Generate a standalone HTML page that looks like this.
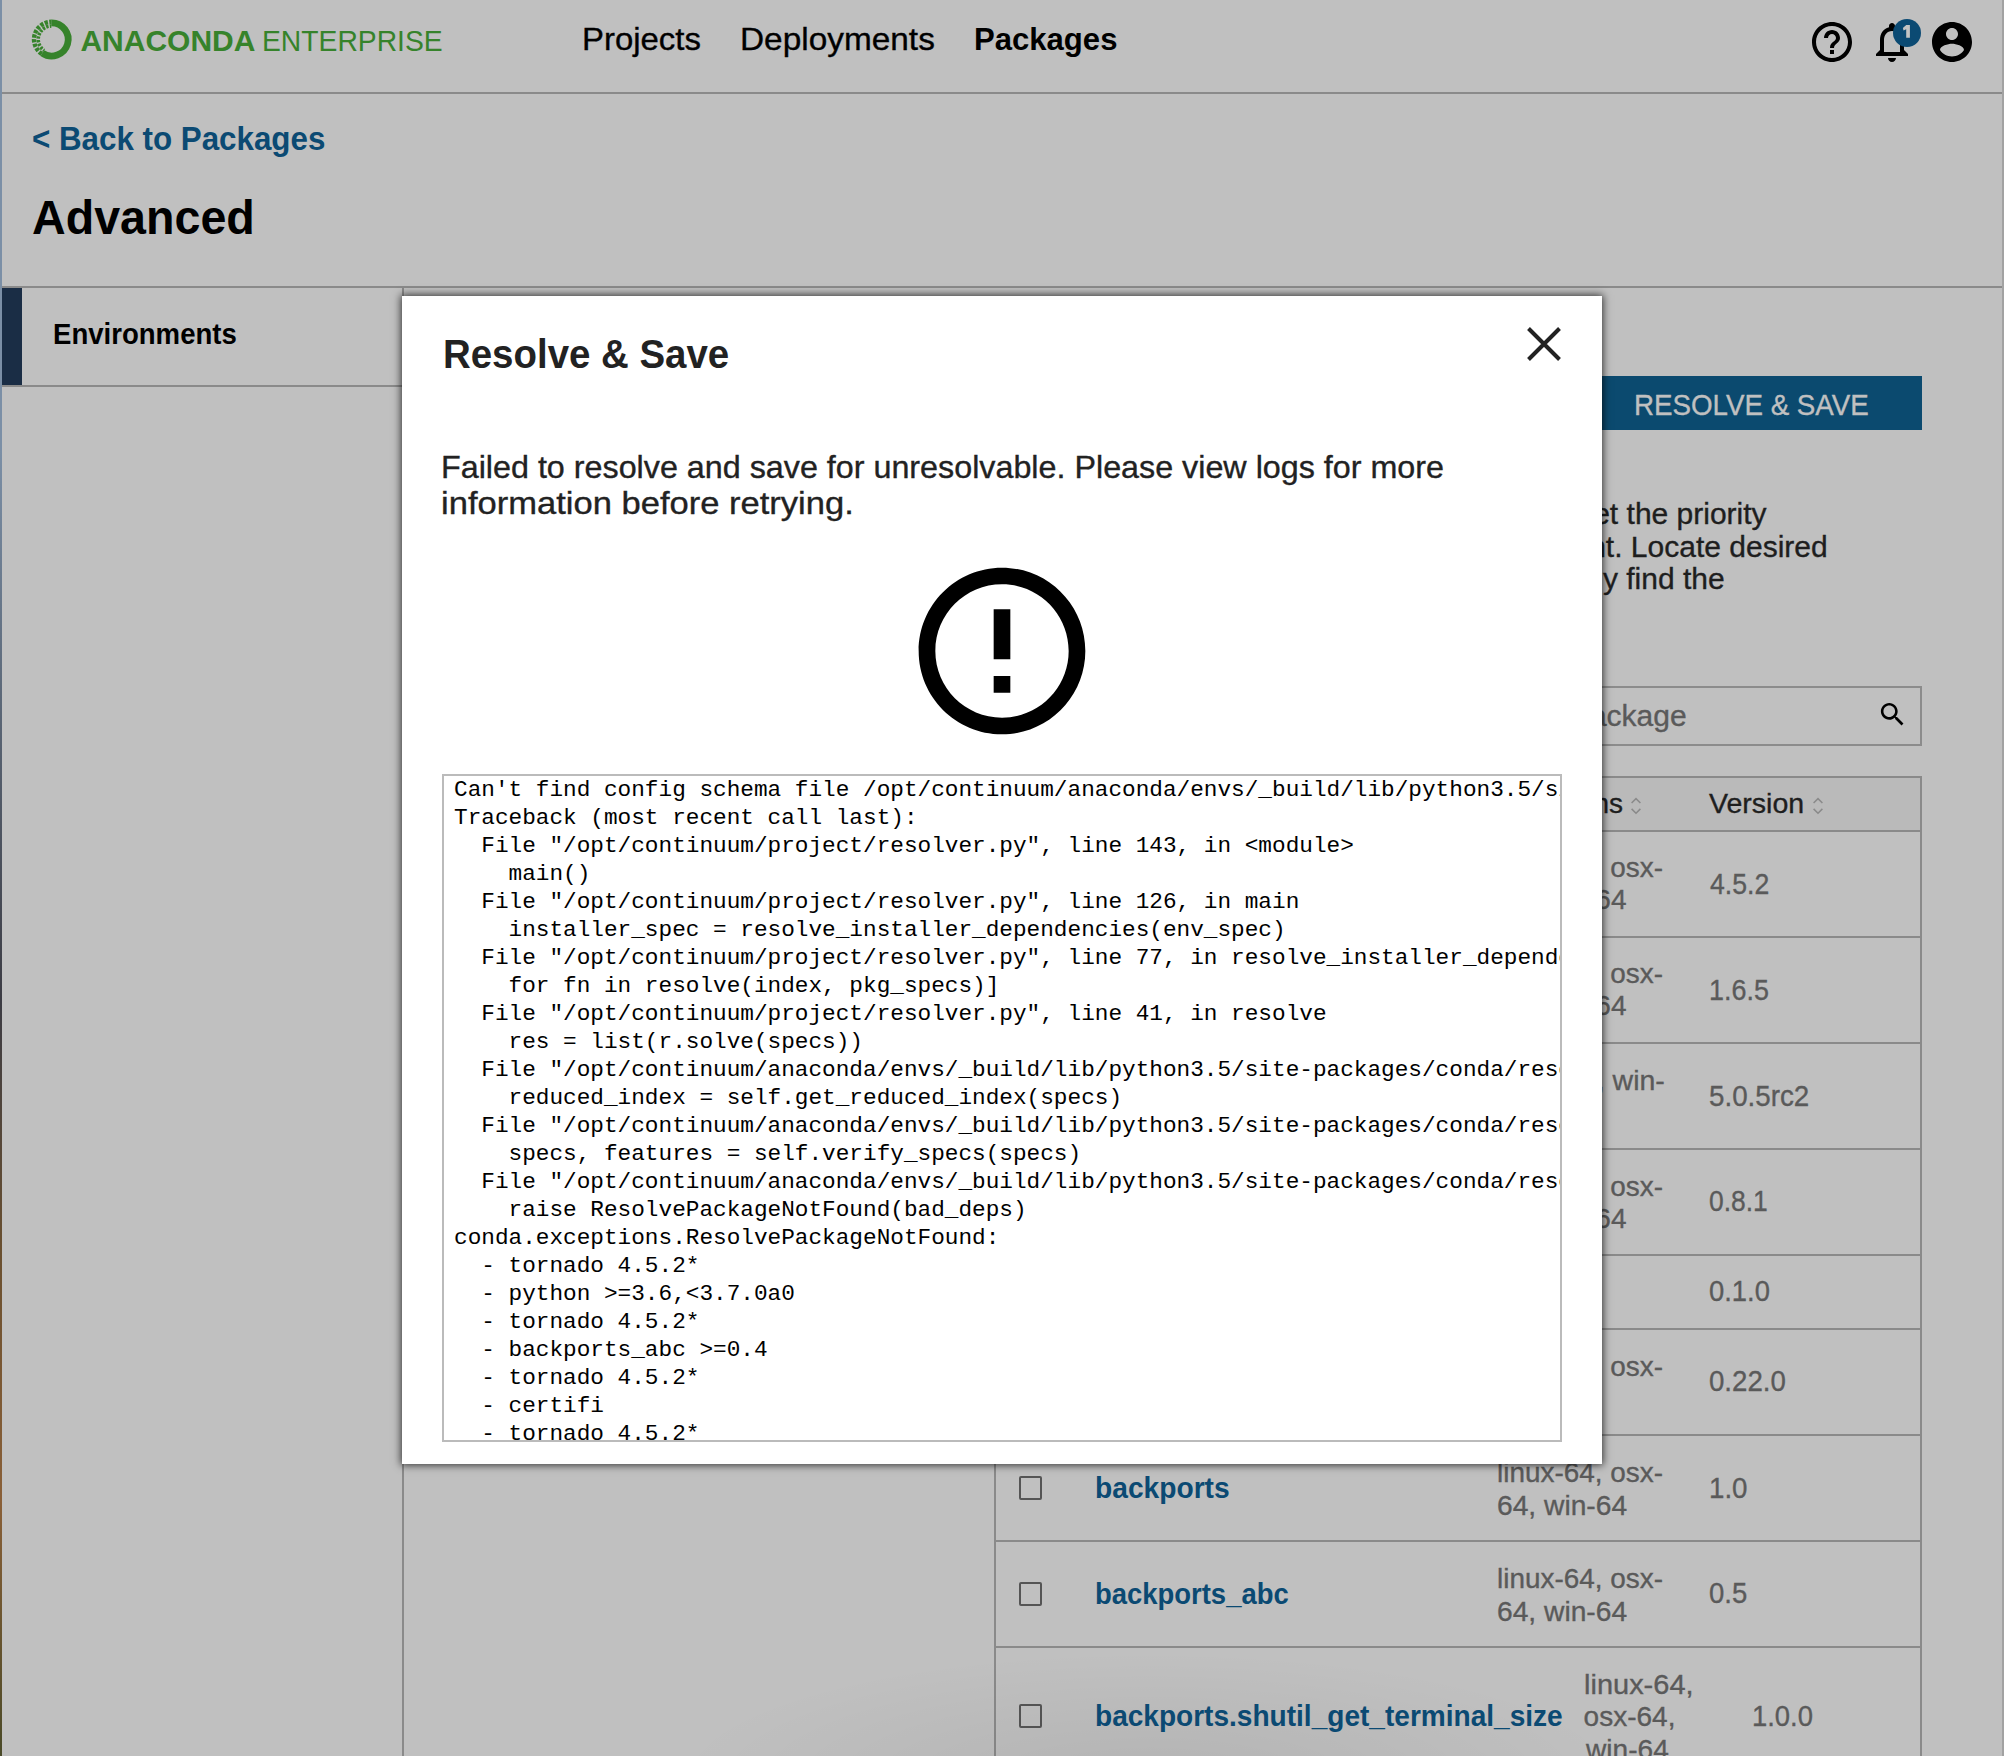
<!DOCTYPE html>
<html><head><meta charset="utf-8"><title>Anaconda Enterprise</title>
<style>
html,body{margin:0;padding:0;}
body{width:2004px;height:1756px;position:relative;overflow:hidden;background:#c0c0c0;font-family:"Liberation Sans",sans-serif;}
.a{position:absolute;}
.t{position:absolute;white-space:pre;transform-origin:0 0;}
.ln{position:absolute;background:#8a8a8a;}
.cb{position:absolute;width:19px;height:20px;border:2px solid #555;border-radius:2px;box-sizing:content-box;}
#modal{position:absolute;left:402px;top:296px;width:1200px;height:1168px;background:#fff;box-shadow:0 0 8px 1px rgba(0,0,0,0.75);}
#pre{position:absolute;left:40px;top:478px;width:1096px;height:664px;border:2px solid #bbb;background:#fff;overflow:hidden;margin:0;padding:0 10px;
font-family:"Liberation Mono",monospace;font-size:22.73px;line-height:28px;color:#000;white-space:pre;}
</style></head><body>
<!-- window edges -->
<div class="a" style="left:0;top:0;width:2px;height:1756px;background:linear-gradient(#7b8fa6 0px,#7b8fa6 450px,#5c6878 700px,#3c3c44 1000px,#6a5030 1250px,#8a6038 1500px,#4a4a28 1756px)"></div>
<div class="a" style="left:2002px;top:0;width:2px;height:1756px;background:#a2a2a2"></div>
<!-- header border -->
<div class="ln" style="left:2px;top:92px;width:2000px;height:2px"></div>
<!-- logo ring -->
<svg class="a" style="left:28px;top:16px" width="48" height="48" viewBox="0 0 48 48"><path d="M23.31 6.80 A16.6 16.6 0 1 1 14.32 37.16" fill="none" stroke="#36832b" stroke-width="6.8"/><path d="M13.76 37.99 A17.6 17.6 0 0 1 23.29 5.80" fill="none" stroke="#36832b" stroke-width="4.4" stroke-dasharray="3.3 1.4"/><path d="M16.11 34.51 A13.4 13.4 0 0 1 23.37 10.00" fill="none" stroke="#36832b" stroke-width="3.6" stroke-dasharray="2.4 1.3" stroke-dashoffset="1.2"/></svg>
<!-- header icons -->
<svg class="a" style="left:1808px;top:18px" width="48" height="48" viewBox="0 0 24 24"><path fill="#000" d="M11 18h2v-2h-2v2zm1-16C6.48 2 2 6.48 2 12s4.48 10 10 10 10-4.48 10-10S17.52 2 12 2zm0 18c-4.41 0-8-3.59-8-8s3.59-8 8-8 8 3.59 8 8-3.59 8-8 8zm0-14c-2.21 0-4 1.79-4 4h2c0-1.1.9-2 2-2s2 .9 2 2c0 2-3 1.75-3 5h2c0-2.25 3-2.5 3-5 0-2.21-1.79-4-4-4z"/></svg>
<svg class="a" style="left:1868px;top:18px" width="48" height="48" viewBox="0 0 24 24"><path fill="#000" d="M12 22c1.1 0 2-.9 2-2h-4c0 1.1.89 2 2 2zm6-6v-5c0-3.07-1.64-5.64-4.5-6.32V4c0-.83-.67-1.5-1.5-1.5s-1.5.67-1.5 1.5v.68C7.63 5.36 6 7.92 6 11v5l-2 2v1h16v-1l-2-2zm-2 1H8v-6c0-2.48 1.51-4.5 4-4.5s4 2.02 4 4.5v6z"/></svg>
<div class="a" style="left:1893px;top:19px;width:28px;height:28px;border-radius:50%;background:#0b4a73"></div>
<svg class="a" style="left:1892px;top:18px" width="30" height="30" viewBox="1892 18 30 30"><path d="M1906.2 25 L1909.9 25 L1909.9 37.8 L1906.2 37.8 L1906.2 29.3 L1903.5 30.5 L1902.9 27.9 Z" fill="#c4c4c4"/></svg>
<svg class="a" style="left:1928px;top:18px" width="48" height="48" viewBox="0 0 24 24"><path fill="#000" d="M12 2C6.48 2 2 6.48 2 12s4.48 10 10 10 10-4.48 10-10S17.52 2 12 2zm0 3c1.66 0 3 1.34 3 3s-1.34 3-3 3-3-1.34-3-3 1.34-3 3-3zm0 14.2c-2.5 0-4.71-1.28-6-3.22.03-1.99 4-3.08 6-3.08 1.99 0 5.97 1.09 6 3.08-1.29 1.94-3.5 3.22-6 3.22z"/></svg>
<!-- page divider -->
<div class="ln" style="left:2px;top:286px;width:2000px;height:2px"></div>
<!-- sidebar -->
<div class="a" style="left:2px;top:288px;width:20px;height:97px;background:#1a2d45"></div>
<div class="ln" style="left:2px;top:385px;width:400px;height:2px"></div>
<div class="ln" style="left:402px;top:288px;width:2px;height:1468px"></div>
<!-- button -->
<div class="a" style="left:1560px;top:376px;width:362px;height:54px;background:#0b4a6f"></div>
<!-- search -->
<div class="a" style="left:1000px;top:686px;width:918px;height:56px;border:2px solid #8c8c8c"></div>
<svg class="a" style="left:1876.5px;top:698.5px" width="31" height="31" viewBox="0 0 24 24"><path fill="#000" d="M15.5 14h-.79l-.28-.27C15.41 12.59 16 11.11 16 9.5 16 5.91 13.09 3 9.5 3S3 5.91 3 9.5 5.91 16 9.5 16c1.61 0 3.09-.59 4.23-1.57l.27.28v.79l5 4.99L20.49 19l-4.99-5zm-6 0C7.01 14 5 11.99 5 9.5S7.01 5 9.5 5 14 7.01 14 9.5 11.99 14 9.5 14z"/></svg>
<!-- table -->
<div class="a" style="left:995px;top:777px;width:926px;height:54px;background:#bababa"></div>
<div class="ln" style="left:995px;top:776px;width:926px;height:2px"></div>
<div class="ln" style="left:994px;top:776px;width:2px;height:980px"></div>
<div class="ln" style="left:1920px;top:776px;width:2px;height:980px"></div>
<div class="ln" style="left:995px;top:830px;width:926px;height:2px"></div>
<div class="ln" style="left:995px;top:936px;width:926px;height:2px"></div>
<div class="ln" style="left:995px;top:1042px;width:926px;height:2px"></div>
<div class="ln" style="left:995px;top:1148px;width:926px;height:2px"></div>
<div class="ln" style="left:995px;top:1254px;width:926px;height:2px"></div>
<div class="ln" style="left:995px;top:1328px;width:926px;height:2px"></div>
<div class="ln" style="left:995px;top:1434px;width:926px;height:2px"></div>
<div class="ln" style="left:995px;top:1540px;width:926px;height:2px"></div>
<div class="ln" style="left:995px;top:1646px;width:926px;height:2px"></div>
<div class="cb" style="left:1019px;top:1476px"></div>
<div class="cb" style="left:1019px;top:1582px"></div>
<div class="cb" style="left:1019px;top:1704px"></div>
<!-- sort arrows -->
<svg class="a" style="left:1628px;top:794px" width="16" height="22" viewBox="0 0 16 22"><path d="M3.6 9 L8 4.6 L12.4 9 M3.6 14.9 L8 19.3 L12.4 14.9" fill="none" stroke="#8a8a8a" stroke-width="1.5"/></svg>
<svg class="a" style="left:1810px;top:794px" width="16" height="22" viewBox="0 0 16 22"><path d="M3.6 9 L8 4.6 L12.4 9 M3.6 14.9 L8 19.3 L12.4 14.9" fill="none" stroke="#8a8a8a" stroke-width="1.5"/></svg>
<div class="a" style="left:500px;top:1556px;width:1504px;height:200px;background:radial-gradient(ellipse 480px 130px at 650px 225px, rgba(0,0,0,0.065), rgba(0,0,0,0) 100%)"></div>
<div class="t" style="left:80.40px;top:25.80px;font-size:30px;line-height:30px;font-weight:bold;color:#36832b">ANACONDA</div>
<div class="t" style="left:261.82px;top:25.80px;font-size:30px;line-height:30px;font-weight:normal;color:#36832b;transform:scaleX(0.9423)">ENTERPRISE</div>
<div class="t" style="left:582.04px;top:23.31px;font-size:32px;line-height:32px;font-weight:normal;color:#000;transform:scaleX(1.0285);-webkit-text-stroke:0.35px #000">Projects</div>
<div class="t" style="left:739.91px;top:23.31px;font-size:32px;line-height:32px;font-weight:normal;color:#000;transform:scaleX(1.0433);-webkit-text-stroke:0.35px #000">Deployments</div>
<div class="t" style="left:973.66px;top:23.31px;font-size:32px;line-height:32px;font-weight:bold;color:#000;transform:scaleX(0.9712)">Packages</div>
<div class="t" style="left:32.15px;top:122.26px;font-size:33px;line-height:33px;font-weight:bold;color:#0b4a73;transform:scaleX(0.9490)">&lt; Back to Packages</div>
<div class="t" style="left:31.55px;top:192.91px;font-size:49px;line-height:49px;font-weight:bold;color:#000;transform:scaleX(0.9516)">Advanced</div>
<div class="t" style="left:52.65px;top:319.75px;font-size:29px;line-height:29px;font-weight:bold;color:#000;transform:scaleX(0.9506)">Environments</div>
<div class="t" style="left:1634.15px;top:389.60px;font-size:30px;line-height:30px;font-weight:normal;color:#c0c0c0;transform:scaleX(0.9244);-webkit-text-stroke:0.35px #c0c0c0">RESOLVE &amp; SAVE</div>
<div class="t" style="left:1249.63px;top:499.20px;font-size:30px;line-height:30px;font-weight:normal;color:#1e1e1e;-webkit-text-stroke:0.35px #1e1e1e">Select the channels and set the priority</div>
<div class="t" style="left:1060.56px;top:531.80px;font-size:30px;line-height:30px;font-weight:normal;color:#1e1e1e;-webkit-text-stroke:0.35px #1e1e1e">in which they are used in the environment. Locate desired</div>
<div class="t" style="left:1072.64px;top:564.20px;font-size:30px;line-height:30px;font-weight:normal;color:#1e1e1e;-webkit-text-stroke:0.35px #1e1e1e">packages below, or use search to quickly find the</div>
<div class="t" style="left:1469.87px;top:701.00px;font-size:30px;line-height:30px;font-weight:normal;color:#5a5a5a;-webkit-text-stroke:0.35px #5a5a5a">Search package</div>
<div class="t" style="left:1504.75px;top:790.49px;font-size:28px;line-height:28px;font-weight:normal;color:#1e1e1e;-webkit-text-stroke:0.35px #1e1e1e">Platforms</div>
<div class="t" style="left:1709.40px;top:790.49px;font-size:28px;line-height:28px;font-weight:normal;color:#1e1e1e;transform:scaleX(1.0194);-webkit-text-stroke:0.35px #1e1e1e">Version</div>
<div class="t" style="left:1709.80px;top:869.55px;font-size:29px;line-height:29px;font-weight:normal;color:#5a5a5a;transform:scaleX(0.9184);-webkit-text-stroke:0.35px #5a5a5a">4.5.2</div>
<div class="t" style="left:1709.14px;top:975.55px;font-size:29px;line-height:29px;font-weight:normal;color:#5a5a5a;transform:scaleX(0.9288);-webkit-text-stroke:0.35px #5a5a5a">1.6.5</div>
<div class="t" style="left:1708.84px;top:1081.55px;font-size:29px;line-height:29px;font-weight:normal;color:#5a5a5a;transform:scaleX(0.9566);-webkit-text-stroke:0.35px #5a5a5a">5.0.5rc2</div>
<div class="t" style="left:1708.89px;top:1187.05px;font-size:29px;line-height:29px;font-weight:normal;color:#5a5a5a;transform:scaleX(0.9107);-webkit-text-stroke:0.35px #5a5a5a">0.8.1</div>
<div class="t" style="left:1708.86px;top:1277.05px;font-size:29px;line-height:29px;font-weight:normal;color:#5a5a5a;transform:scaleX(0.9443);-webkit-text-stroke:0.35px #5a5a5a">0.1.0</div>
<div class="t" style="left:1708.85px;top:1367.05px;font-size:29px;line-height:29px;font-weight:normal;color:#5a5a5a;transform:scaleX(0.9529);-webkit-text-stroke:0.35px #5a5a5a">0.22.0</div>
<div class="t" style="left:1709.09px;top:1473.55px;font-size:29px;line-height:29px;font-weight:normal;color:#5a5a5a;transform:scaleX(0.9547);-webkit-text-stroke:0.35px #5a5a5a">1.0</div>
<div class="t" style="left:1708.85px;top:1579.45px;font-size:29px;line-height:29px;font-weight:normal;color:#5a5a5a;transform:scaleX(0.9480);-webkit-text-stroke:0.35px #5a5a5a">0.5</div>
<div class="t" style="left:1752.11px;top:1701.85px;font-size:29px;line-height:29px;font-weight:normal;color:#5a5a5a;transform:scaleX(0.9451);-webkit-text-stroke:0.35px #5a5a5a">1.0.0</div>
<div class="t" style="left:1497.30px;top:854.29px;font-size:28px;line-height:28px;font-weight:normal;color:#5a5a5a;transform:scaleX(0.9971);-webkit-text-stroke:0.35px #5a5a5a">linux-64, osx-</div>
<div class="t" style="left:1497.30px;top:886.29px;font-size:28px;line-height:28px;font-weight:normal;color:#5a5a5a;-webkit-text-stroke:0.35px #5a5a5a">64, win-64</div>
<div class="t" style="left:1497.30px;top:960.29px;font-size:28px;line-height:28px;font-weight:normal;color:#5a5a5a;transform:scaleX(0.9971);-webkit-text-stroke:0.35px #5a5a5a">linux-64, osx-</div>
<div class="t" style="left:1497.30px;top:992.29px;font-size:28px;line-height:28px;font-weight:normal;color:#5a5a5a;-webkit-text-stroke:0.35px #5a5a5a">64, win-64</div>
<div class="t" style="left:1497.28px;top:1066.69px;font-size:28px;line-height:28px;font-weight:normal;color:#5a5a5a;transform:scaleX(1.0176);-webkit-text-stroke:0.35px #5a5a5a">linux-64, win-</div>
<div class="t" style="left:1497.30px;top:1172.69px;font-size:28px;line-height:28px;font-weight:normal;color:#5a5a5a;transform:scaleX(0.9971);-webkit-text-stroke:0.35px #5a5a5a">linux-64, osx-</div>
<div class="t" style="left:1497.30px;top:1204.69px;font-size:28px;line-height:28px;font-weight:normal;color:#5a5a5a;-webkit-text-stroke:0.35px #5a5a5a">64, win-64</div>
<div class="t" style="left:1497.30px;top:1353.19px;font-size:28px;line-height:28px;font-weight:normal;color:#5a5a5a;transform:scaleX(0.9971);-webkit-text-stroke:0.35px #5a5a5a">linux-64, osx-</div>
<div class="t" style="left:1497.30px;top:1459.49px;font-size:28px;line-height:28px;font-weight:normal;color:#5a5a5a;transform:scaleX(0.9971);-webkit-text-stroke:0.35px #5a5a5a">linux-64, osx-</div>
<div class="t" style="left:1497.29px;top:1491.69px;font-size:28px;line-height:28px;font-weight:normal;color:#5a5a5a;transform:scaleX(1.0069);-webkit-text-stroke:0.35px #5a5a5a">64, win-64</div>
<div class="t" style="left:1497.30px;top:1565.49px;font-size:28px;line-height:28px;font-weight:normal;color:#5a5a5a;transform:scaleX(0.9971);-webkit-text-stroke:0.35px #5a5a5a">linux-64, osx-</div>
<div class="t" style="left:1497.29px;top:1597.69px;font-size:28px;line-height:28px;font-weight:normal;color:#5a5a5a;transform:scaleX(1.0069);-webkit-text-stroke:0.35px #5a5a5a">64, win-64</div>
<div class="t" style="left:1583.56px;top:1671.39px;font-size:28px;line-height:28px;font-weight:normal;color:#5a5a5a;transform:scaleX(1.0354);-webkit-text-stroke:0.35px #5a5a5a">linux-64,</div>
<div class="t" style="left:1583.60px;top:1703.49px;font-size:28px;line-height:28px;font-weight:normal;color:#5a5a5a;-webkit-text-stroke:0.35px #5a5a5a">osx-64,</div>
<div class="t" style="left:1585.60px;top:1735.69px;font-size:28px;line-height:28px;font-weight:normal;color:#5a5a5a;transform:scaleX(1.0035);-webkit-text-stroke:0.35px #5a5a5a">win-64</div>
<div class="t" style="left:1095.43px;top:1473.65px;font-size:29px;line-height:29px;font-weight:bold;color:#0b4a73;transform:scaleX(0.9716)">backports</div>
<div class="t" style="left:1095.45px;top:1579.55px;font-size:29px;line-height:29px;font-weight:bold;color:#0b4a73;transform:scaleX(0.9461)">backports_abc</div>
<div class="t" style="left:1095.43px;top:1701.55px;font-size:29px;line-height:29px;font-weight:bold;color:#0b4a73;transform:scaleX(0.9673)">backports.shutil_get_terminal_size</div>
<!-- modal -->
<div id="modal">
 <svg class="a" style="left:1125px;top:31px" width="34" height="34" viewBox="0 0 34 34"><path d="M1.5 1.5 L32.5 32.5 M32.5 1.5 L1.5 32.5" stroke="#222" stroke-width="4"/></svg>
 <svg class="a" style="left:500px;top:255px" width="200" height="200" viewBox="0 0 24 24"><path fill="#000" d="M11 15h2v2h-2zm0-8h2v6h-2zm.99-5C6.47 2 2 6.48 2 12s4.47 10 9.99 10C17.52 22 22 17.52 22 12S17.52 2 11.99 2zM12 20c-4.42 0-8-3.58-8-8s3.58-8 8-8 8 3.58 8 8-3.58 8-8 8z"/></svg>
 <pre id="pre">Can't find config schema file /opt/continuum/anaconda/envs/_build/lib/python3.5/site-packages/conda/config.yaml
Traceback (most recent call last):
  File "/opt/continuum/project/resolver.py", line 143, in &lt;module&gt;
    main()
  File "/opt/continuum/project/resolver.py", line 126, in main
    installer_spec = resolve_installer_dependencies(env_spec)
  File "/opt/continuum/project/resolver.py", line 77, in resolve_installer_dependencies
    for fn in resolve(index, pkg_specs)]
  File "/opt/continuum/project/resolver.py", line 41, in resolve
    res = list(r.solve(specs))
  File "/opt/continuum/anaconda/envs/_build/lib/python3.5/site-packages/conda/resolve.py", line 839, in solve
    reduced_index = self.get_reduced_index(specs)
  File "/opt/continuum/anaconda/envs/_build/lib/python3.5/site-packages/conda/resolve.py", line 486, in get_reduced_index
    specs, features = self.verify_specs(specs)
  File "/opt/continuum/anaconda/envs/_build/lib/python3.5/site-packages/conda/resolve.py", line 332, in verify_specs
    raise ResolvePackageNotFound(bad_deps)
conda.exceptions.ResolvePackageNotFound:
  - tornado 4.5.2*
  - python &gt;=3.6,&lt;3.7.0a0
  - tornado 4.5.2*
  - backports_abc &gt;=0.4
  - tornado 4.5.2*
  - certifi
  - tornado 4.5.2*
  - singledispatch</pre>
</div>
<div class="t" style="left:442.53px;top:334.49px;font-size:41px;line-height:41px;font-weight:bold;color:#222;transform:scaleX(0.9372)">Resolve &amp; Save</div>
<div class="t" style="left:441.48px;top:451.31px;font-size:32px;line-height:32px;font-weight:normal;color:#222;transform:scaleX(1.0088);-webkit-text-stroke:0.35px #222">Failed to resolve and save for unresolvable. Please view logs for more</div>
<div class="t" style="left:441.34px;top:487.01px;font-size:32px;line-height:32px;font-weight:normal;color:#222;transform:scaleX(1.0794);-webkit-text-stroke:0.35px #222">information before retrying.</div>
</body></html>
